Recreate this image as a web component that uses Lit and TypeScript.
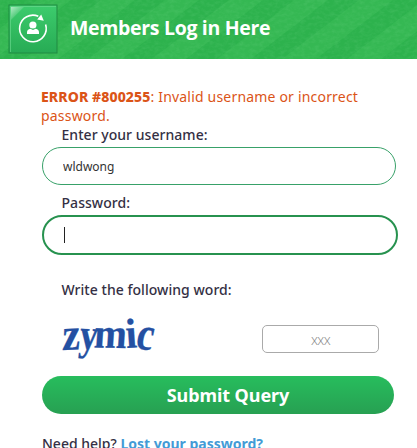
import { LitElement, html, css, svg } from 'lit';
import { customElement, property } from 'lit/decorators.js';

@customElement('members-header')
export class MembersHeader extends LitElement {
  static styles = css`
    :host {
      display: block;
    }
    .header {
      display: grid;
      height: 59px;
      overflow: hidden;
      background: #2db24d;
    }
    .grass,
    .bar {
      grid-area: 1 / 1;
    }
    .bar {
      display: flex;
      align-items: flex-start;
      padding: 4px 0 0 8px;
      z-index: 1;
    }
    .logo {
      width: 50px;
      height: 50px;
      flex: none;
    }
    h1 {
      margin: 10px 0 0 12px;
      color: #fff;
      font: bold 19.5px/28px 'Open Sans', sans-serif;
      letter-spacing: -0.32px;
      white-space: nowrap;
    }
  `;

  render() {
    return html`
      <div class="header">
        <svg class="grass" width="417" height="59" viewBox="0 0 417 59">
          <filter id="turf" x="0" y="0" width="100%" height="100%">
            <feTurbulence type="fractalNoise" baseFrequency="0.2 0.3" numOctaves="3" />
            <feColorMatrix
              values="0 0 0 0 0.3  0 0 0 0 0.8  0 0 0 0 0.4  1.2 0 0 0 -0.45"
            />
          </filter>
          ${[-40, 24, 88, 152, 217, 282, 347, 412].map(
            (x) => svg`
              <path d="M${x} 59 l77 -59 h34 l-77 59 z" fill="#35b853" />
            `
          )}
          <rect width="417" height="59" filter="url(#turf)" opacity="0.2" />
        </svg>
        <div class="bar">
          <svg class="logo" viewBox="0 0 50 50">
            <defs>
              <linearGradient id="tile" x1="0" y1="0" x2="0" y2="1">
                <stop offset="0" stop-color="#3dcc6d" />
                <stop offset="1" stop-color="#27ab54" />
              </linearGradient>
              <linearGradient id="shine" x1="0" y1="0" x2="1" y2="1">
                <stop offset="0" stop-color="#fff" stop-opacity="0.6" />
                <stop offset="0.55" stop-color="#fff" stop-opacity="0.1" />
              </linearGradient>
            </defs>
            <rect x="1" y="1" width="48" height="48" fill="url(#tile)" stroke="#218b42" />
            <path d="M3 3 h13 L3 16 z" fill="url(#shine)" />
            <path d="M2.5 48 V2.5 H48" fill="none" stroke="#6fdc92" stroke-opacity="0.6" />
            <path
              d="M30.3 12.3 A13.3 13.3 0 1 0 37.6 20.5"
              fill="none"
              stroke="#fff"
              stroke-width="1.6"
            />
            <path d="M33.2 10.4 L35.8 16.8 L29.2 15.6 z" fill="#fff" />
            <circle cx="24.9" cy="21" r="3.6" fill="#fff" />
            <path d="M19 30 v-1.6 q0-3 3.4-3.6 l2.6 1.2 2.6-1.2 q3.4 .6 3.4 3.6 V30 z" fill="#fff" />
          </svg>
          <h1>Members Log in Here</h1>
        </div>
      </div>
    `;
  }
}

@customElement('captcha-word')
export class CaptchaWord extends LitElement {
  static styles = css`
    :host,
    svg {
      display: block;
      overflow: visible;
    }
    text {
      fill: #2450a2;
      stroke: #2450a2;
      stroke-width: 0.3;
      font: bold 42px 'Liberation Serif', serif;
    }
  `;

  @property({ type: Array }) glyphs = [
    { char: 'z', transform: 'translate(1 37) rotate(-2) skewX(-4) scale(.95 1.08)' },
    { char: 'y', transform: 'translate(17.5 36) rotate(2) skewX(-4) scale(.86 1.05)' },
    { char: 'm', transform: 'translate(32.5 34.5) rotate(1) skewX(-3) scale(.93 1)' },
    { char: 'i', transform: 'translate(65.5 35) rotate(-4) scale(.95 1)' },
    { char: 'c', transform: 'translate(73.5 35.5) rotate(6) skewX(-6) scale(.9 1.12)' },
  ];

  render() {
    return html`
      <svg width="100" height="50" viewBox="0 0 100 50">
        ${this.glyphs.map(
          (glyph) => svg`<text transform=${glyph.transform}>${glyph.char}</text>`
        )}
      </svg>
    `;
  }
}

@customElement('app-root')
export class AppRoot extends LitElement {
  static styles = css`
    :host {
      display: block;
      height: 448px;
      overflow: hidden;
      background: #fff;
      color: #343044;
      font: 500 14px/19px 'Noto Sans', sans-serif;
    }
    * {
      box-sizing: border-box;
    }
    form {
      display: flex;
      flex-direction: column;
      padding: 28px 19px 0 42px;
    }
    .error {
      width: 340px;
      margin-left: -1px;
      color: #db5417;
      font-weight: 400;
      letter-spacing: 0.19px;
    }
    .error strong {
      font-weight: 800;
      letter-spacing: 0.1px;
    }
    label {
      display: block;
      padding-left: 19.5px;
      letter-spacing: 0.04px;
    }
    .field {
      display: flex;
      align-items: center;
      width: 354px;
      height: 38px;
      margin: 3px 0 8px;
      padding: 0 20px;
      border: 1px solid #38a169;
      border-radius: 20px;
    }
    .field input {
      width: 100%;
      padding: 0;
      border: none;
      outline: none;
      background: none;
      color: #333;
      font: 12px 'Noto Sans', sans-serif;
    }
    .field.focused {
      width: 356px;
      height: 40px;
      margin: 3px 0 25px;
      border: 2px solid #27924f;
    }
    .caret {
      flex: none;
      width: 1px;
      height: 16px;
      background: #222;
    }
    .captcha {
      display: flex;
      align-items: flex-start;
      justify-content: space-between;
      width: 337px;
      height: 50px;
      margin-top: 14px;
      padding-left: 19px;
    }
    .captcha input {
      width: 117px;
      height: 28px;
      margin-top: 12px;
      padding: 0;
      border: 1px solid #aaa;
      border-radius: 5px;
      outline: none;
      text-align: center;
      font: 300 14px 'Open Sans', sans-serif;
      letter-spacing: -0.6px;
    }
    .captcha input::placeholder {
      color: #858585;
    }
    .submit {
      width: 352px;
      height: 38px;
      margin: 13px 0 20px;
      padding: 0 0 0 20px;
      border: none;
      border-radius: 19px;
      background: linear-gradient(#27bd5d, #27a052);
      color: #fff;
      font: bold 18px 'Noto Sans', sans-serif;
      letter-spacing: -0.08px;
    }
    .help {
      white-space: nowrap;
    }
    .help a {
      color: #439bd6;
      font-weight: 700;
      text-decoration: none;
    }
  `;

  render() {
    return html`
      <members-header></members-header>
      <form>
        <div class="error">
          <strong>ERROR #800255</strong>: Invalid username or incorrect password.
        </div>
        <label for="username">Enter your username:</label>
        <div class="field">
          <input id="username" type="text" .value=${'wldwong'} />
        </div>
        <label for="password">Password:</label>
        <div class="field focused">
          <span class="caret"></span>
          <input id="password" type="password" />
        </div>
        <label for="word">Write the following word:</label>
        <div class="captcha">
          <captcha-word></captcha-word>
          <input id="word" type="text" placeholder="xxx" />
        </div>
        <button class="submit" type="button">Submit Query</button>
        <div class="help">Need help? <a href="#">Lost your password?</a></div>
      </form>
    `;
  }
}
